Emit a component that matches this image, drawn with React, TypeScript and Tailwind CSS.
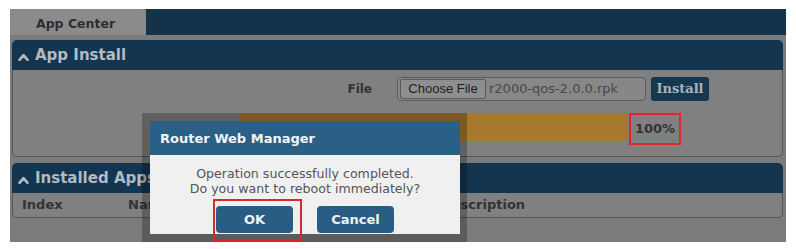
import React from "react";

const Chevron = () => (
  <svg width="11" height="8" viewBox="0 0 11 8" className="block shrink-0">
    <path d="M1.5 6.8 L5.5 2.2 L9.5 6.8" fill="none" stroke="#b3bac0" strokeWidth="2.6" strokeLinecap="round" strokeLinejoin="round" />
  </svg>
);

const PanelHeader = ({ title }: { title: string }) => (
  <div className="h-[30px] shrink-0 overflow-hidden bg-[#143550] rounded-t-[5px] flex items-center pl-[6px] gap-[6px]">
    <div className="pt-[3px]">
      <Chevron />
    </div>
    <span className="text-[15px] font-bold text-[#b3bac0] leading-[18px]">{title}</span>
  </div>
);

export default function App() {
  return (
    <div
      className="relative w-[796px] h-[249px] bg-white pt-[9px] pl-[10px] overflow-hidden"
      style={{ fontFamily: '"DejaVu Sans", Verdana, sans-serif' }}
    >
      <div className="w-[776px] h-[233px] bg-[#7b7b7b] flex flex-col">
        {/* tab row */}
        <div className="h-[26px] flex shrink-0 overflow-hidden">
          <div className="w-[136px] bg-[#8b8b8b] rounded-tr-[5px] flex items-center pl-[26px] pt-[4px]">
            <span className="text-[12.5px] leading-[16px] font-bold text-[#2e2e2e]">App Center</span>
          </div>
          <div className="flex-1 bg-[#14324a]" />
        </div>

        {/* App Install panel */}
        <div className="mt-[5px] ml-[2px] w-[771px] h-[117px] shrink-0 flex flex-col">
          <PanelHeader title="App Install" />
          <div className="h-[87px] shrink-0 overflow-hidden border border-t-0 border-[#555] rounded-b-[5px] bg-[#808080]">
            <div className="mt-[7px] h-[24px] flex items-center">
              <div className="w-[384px] text-right pr-[25px] text-[12px] leading-[16px] font-bold text-[#333]">File</div>
              <div className="w-[249px] h-[24px] border border-[#5c5c5c] rounded-[4px] bg-[#878787] flex items-center pl-[2px]">
                <div
                  className="w-[86px] h-[20px] border border-[#5a5a5a] rounded-[2px] bg-[#8e8e8e] flex items-center justify-center text-[13px] leading-[16px] text-[#1e1e1e]"
                  style={{ fontFamily: '"Liberation Sans", Arial, sans-serif' }}
                >
                  Choose File
                </div>
                <span className="ml-[3px] text-[13px] leading-[16px] text-[#474747]">r2000-qos-2.0.0.rpk</span>
              </div>
              <div
                className="ml-[5px] w-[58px] h-[24px] rounded-[3px] bg-[#16384f] flex items-center justify-center text-[13px] leading-[16px] font-bold text-[#a9b3bb]"
                style={{ fontFamily: '"DejaVu Serif", Georgia, serif' }}
              >
                Install
              </div>
            </div>
            <div className="mt-[12px] h-[32px] flex items-start pl-[227px]">
              <div className="w-[388px] h-[28px] bg-[#a6792f]" />
              <div className="ml-[1px] w-[52px] h-[32px] border-2 border-[#e0262b] flex items-center justify-center text-[13px] leading-[16px] font-bold text-[#333]">
                100%
              </div>
            </div>
          </div>
        </div>

        {/* Installed Apps panel */}
        <div className="mt-[6px] ml-[2px] w-[771px] h-[55px] shrink-0 flex flex-col">
          <PanelHeader title="Installed Apps" />
          <div className="h-[25px] shrink-0 overflow-hidden border border-t-0 border-[#555] rounded-b-[5px] bg-[#808080] flex items-center text-[13px] leading-[16px] font-bold text-[#333]">
            <span className="ml-[9px] w-[106px]">Index</span>
            <span className="w-[150px]">Name</span>
            <span className="w-[163px]">Version</span>
            <span>Description</span>
          </div>
        </div>
      </div>

      {/* dialog */}
      <div className="absolute left-[142px] top-[113px] w-[325px] h-[129px] bg-black/25 p-[8px]">
        <div className="w-[310px] h-[113px] flex flex-col">
          <div className="h-[34px] shrink-0 bg-[#2a5f87] flex items-center pl-[10px] pt-[1px]">
            <span className="text-[13px] leading-[16px] font-bold text-[#f2f4f6]">Router Web Manager</span>
          </div>
          <div className="flex-1 bg-[#f0f0f0] flex flex-col items-center pt-[11px]">
            <div className="text-[12.6px] leading-[15px] text-[#555] text-center">
              <div>Operation successfully completed.</div>
              <div>Do you want to reboot immediately?</div>
            </div>
            <div className="mt-[10px] flex gap-[24px]">
              <div className="w-[77px] h-[27px] rounded-[4px] bg-[#2a5d83] flex items-center justify-center text-[13px] leading-[16px] font-bold text-[#f3f3f3]">
                OK
              </div>
              <div className="w-[77px] h-[27px] rounded-[4px] bg-[#2a5d83] flex items-center justify-center text-[13px] leading-[16px] font-bold text-[#f3f3f3]">
                Cancel
              </div>
            </div>
          </div>
        </div>
      </div>

      {/* annotation box around OK */}
      <div className="absolute left-[213px] top-[199px] w-[89px] h-[43px] border-2 border-[#e0262b]" />
    </div>
  );
}
